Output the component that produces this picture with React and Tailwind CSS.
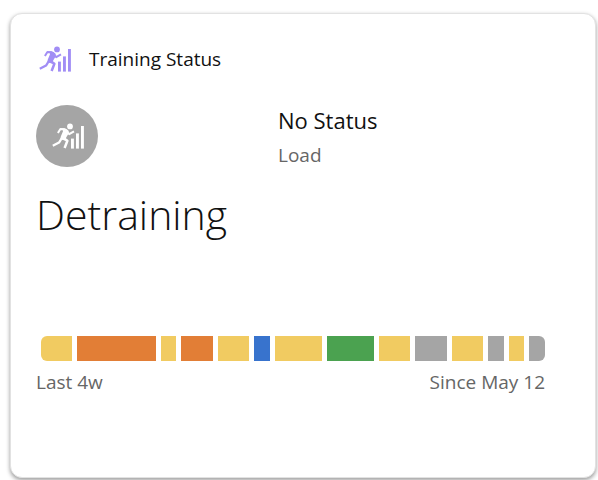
const segments = [
  { days: 2, color: 'bg-[#f1cb61]' },
  { days: 5, color: 'bg-[#e27e36]' },
  { days: 1, color: 'bg-[#f1cb61]' },
  { days: 2, color: 'bg-[#e27e36]' },
  { days: 2, color: 'bg-[#f1cb61]' },
  { days: 1, color: 'bg-[#3873cd]' },
  { days: 3, color: 'bg-[#f1cb61]' },
  { days: 3, color: 'bg-[#4ba250]' },
  { days: 2, color: 'bg-[#f1cb61]' },
  { days: 2, color: 'bg-[#a5a5a5]' },
  { days: 2, color: 'bg-[#f1cb61]' },
  { days: 1, color: 'bg-[#a5a5a5]' },
  { days: 1, color: 'bg-[#f1cb61]' },
  { days: 1, color: 'bg-[#a5a5a5]' },
];

function RunnerIcon({ className }) {
  return (
    <svg viewBox="0 0 32 26" className={className} fill="currentColor" aria-hidden="true">
      <circle cx="18" cy="3.4" r="2.9" />
      <path d="M10.4 5.2 L14.6 6 L16.8 8 L16 11.4 L14.2 14.6 L13.4 17.6 L8.4 16.4 L8.8 13.4 L11 8.2 Z" />
      <g fill="none" stroke="currentColor" strokeWidth="2" strokeLinejoin="round">
        <path d="M13.4 6.2 L8.4 6 L5.9 10" />
        <path d="M14.8 8.4 L17.2 11.2 L22 8.3" />
        <path d="M11.8 15.4 L15.4 17.8 L12.6 25" strokeWidth="2.5" />
        <path d="M9.9 15 L7 19.6 L0.8 22.8" strokeWidth="2.3" />
      </g>
      <rect x="19" y="15.6" width="2.9" height="10" />
      <rect x="24" y="10.4" width="2.9" height="15.2" />
      <rect x="29" y="3" width="2.9" height="22.6" />
    </svg>
  );
}

export default function App() {
  return (
    <main className="min-h-screen bg-white pt-[13px] pr-[2px] pb-[2px] pl-[10px] font-['Open_Sans',sans-serif] text-[#111111]">
      <section className="rounded-xl border border-[#e2e2e2] bg-white px-[25px] pt-8 pb-[82px] shadow-[0_2px_4px_rgba(0,0,0,0.4)]">
        <header className="flex items-center gap-[18px] pl-[3px]">
          <RunnerIcon className="h-[26px] w-8 text-[#a18df5]" />
          <h1 className="text-[19px] leading-[26px]">Training Status</h1>
        </header>

        <div className="mt-[33px] grid grid-cols-[242px_1fr] items-start">
          <div className="flex size-[62px] items-center justify-center rounded-full bg-[#a5a5a5]">
            <RunnerIcon className="ml-[2px] h-[26px] w-8 text-white" />
          </div>
          <div>
            <p className="text-[22px] leading-[30px]">No Status</p>
            <p className="mt-[5px] text-[19px] leading-[30px] text-[#666666]">Load</p>
          </div>
        </div>

        <h2 className="mt-[18px] text-[41px] leading-[52px] font-light">Detraining</h2>

        <div className="mt-[96px] mr-[25px]">
          <div className="ml-[5px] flex h-[25px] gap-[5px] overflow-hidden rounded-md">
            {segments.map((segment, index) => (
              <div key={index} className={segment.color} style={{ flex: `${segment.days} 1 0` }} />
            ))}
          </div>
          <div className="mt-2 flex justify-between text-[19px] leading-[26px] text-[#666666]">
            <span>Last 4w</span>
            <span>Since May 12</span>
          </div>
        </div>
      </section>
    </main>
  );
}
